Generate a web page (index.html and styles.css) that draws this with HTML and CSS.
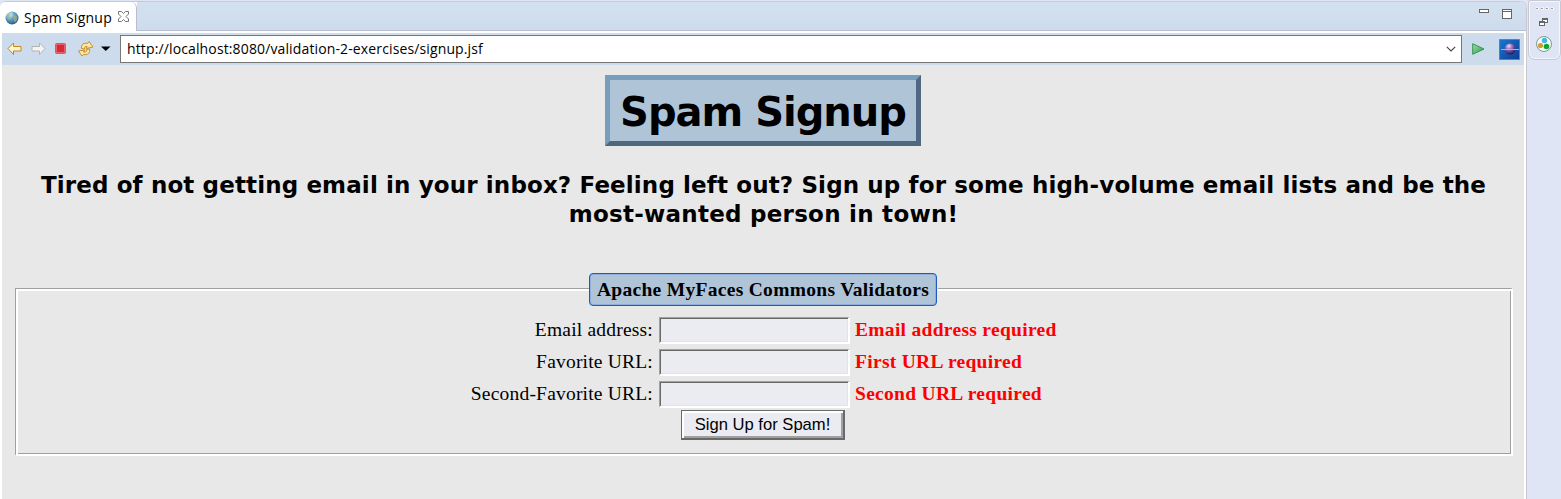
FILE: index.html
```html
<!DOCTYPE html>
<html lang="en">
<head>
<meta charset="utf-8">
<title>Spam Signup</title>
<link rel="stylesheet" href="styles.css">
</head>
<body>
<div class="workbench">
  <section class="view">
    <header class="tabbar">
      <div class="tab">
        <svg class="globe" width="14" height="14" viewBox="0 0 14 14"><defs><radialGradient id="sea" cx=".35" cy=".25" r=".8"><stop offset="0" stop-color="#e3f4f8"/><stop offset=".4" stop-color="#6aa9cf"/><stop offset="1" stop-color="#1d568c"/></radialGradient></defs><circle cx="7" cy="7" r="6.500" fill="url(#sea)"/><path d="M2 4l2-2 2 1-1 3 1 2-2 1-2-2zM9 5l2-1 1.500 3-1 3-2 1.500-1-3z" fill="#a9ba78" opacity=".65"/></svg>
        <span class="tab-title">Spam Signup</span>
        <svg class="close" width="11" height="11" viewBox="0 0 11 11"><path d="M.5.5h3L5.500 2.500 7.500.5h3v2.500L8 5.500l2.500 2.500v2.500h-3L5.500 8.500l-2 2h-3V8L3 5.500.5 3z" fill="#fff" stroke="#777"/></svg>
      </div>
      <div class="tab-space">
        <svg width="34" height="12" viewBox="0 0 34 12" shape-rendering="crispEdges"><path d="M.5 1.500h9v3h-9z" fill="#fff" stroke="#666"/><path d="M23.500 1.500h9v9h-9z" fill="#fff" stroke="#666"/><path d="M23 3.500h10" stroke="#666"/></svg>
      </div>
    </header>
    <nav class="toolbar">
      <svg class="tools" width="112" height="20" viewBox="0 0 112 20">
        <path d="M8 10l5.500-5.500v3.500h7.500v4.500h-7.500v3.500z" fill="#fff5cf" stroke="#c18620" stroke-linejoin="round" transform="translate(-2 -.5)"/>
        <path d="M43 10l-5.500-5.500v3.500H30v4.500h7.500v3.500z" fill="#f4f4f4" stroke="#b3b3b3" stroke-linejoin="round" transform="translate(0 -.5)"/>
        <rect x="53.500" y="4.500" width="10" height="10" rx="1" fill="#e85f69" stroke="#d05c66"/><rect x="55" y="6" width="7" height="7" fill="#dc2835"/>
        <path d="M79.500 9.500C79 5.500 82 3.500 85.500 4.500L87 2.500 91 8 84.500 9.500 85 7.500C83 7 82.500 8 82.500 10z" fill="#ffe7a0" stroke="#c18620" stroke-width=".9" stroke-linejoin="round"/>
        <path d="M87.500 10C88.500 14 85.500 16.500 81.500 15.500L80 17 76.500 12 82.500 11 81.500 13C84 13.500 85 12.500 84.500 10.500z" fill="#ffe7a0" stroke="#c18620" stroke-width=".9" stroke-linejoin="round"/>
        <path d="M99 7.500h9.500L103.750 12z" fill="#000"/>
      </svg>
      <div class="address"><span class="url">http://localhost:8080/validation-2-exercises/signup.jsf</span>
        <svg width="10" height="6" viewBox="0 0 10 6"><path d="M.8.8 5 5 9.200.8" fill="none" stroke="#444" stroke-width="1.100"/></svg>
      </div>
      <svg class="go" width="13" height="12" viewBox="0 0 13 12"><defs><linearGradient id="green" x2="1" y2="1"><stop stop-color="#a2dda3"/><stop offset="1" stop-color="#31974e"/></linearGradient></defs><path d="M.7.7v10.600L12 6z" fill="url(#green)" stroke="#33955a"/></svg>
      <svg class="planet" width="21" height="21" viewBox="0 0 21 21"><defs><linearGradient id="sky" x2="1" y2="1"><stop stop-color="#1878d0"/><stop offset="1" stop-color="#103b92"/></linearGradient><radialGradient id="ball" cx=".4" cy=".25" r=".8"><stop stop-color="#e8dcf6"/><stop offset=".4" stop-color="#8a6bb8"/><stop offset="1" stop-color="#1e0b4c"/></radialGradient></defs><path d="M.5.5h20v20H.5z" fill="url(#sky)" stroke="#2b91df"/><circle cx="11" cy="10" r="5.500" fill="url(#ball)"/><path d="M2 10.500h18" stroke="#a3b0ea"/></svg>
    </nav>
    <main class="page">
      <h1 class="title">Spam Signup</h1>
      <h2 class="intro"><span class="intro-first">Tired of not getting email in your inbox? Feeling left out? Sign up for some high-volume email lists and be the</span><br><span class="intro-last">most-wanted person in town!</span></h2>
      <form class="group">
        <div class="legend"><span>Apache MyFaces Commons Validators</span></div>
        <div class="fields">
          <label class="label">Email address:</label><input class="field"><b class="error">Email address required</b>
          <label class="label">Favorite URL:</label><input class="field"><b class="error">First URL required</b>
          <label class="label">Second-Favorite URL:</label><input class="field"><b class="error">Second URL required</b>
        </div>
        <button class="submit" type="button">Sign Up for Spam!</button>
      </form>
    </main>
  </section>
  <aside class="trim">
    <div class="trim-box">
      <svg width="34" height="60" viewBox="0 0 34 60"><path d="M9 8.500h3m2 0h3m2 0h3m2 0h3" stroke="#fff" stroke-width="2"/><path d="M9 8.500h2m3 0h2m3 0h2m3 0h2" stroke="#a09d98"/>
      <g fill="#fff" stroke="#666" shape-rendering="crispEdges"><path d="M15.500 18.500h5v4h-5zM12.500 21.500h5v4h-5z"/><path d="M15 19.500h6M12 22.500h6"/></g>
      <circle cx="17" cy="44" r="7.500" fill="#f5faf6" stroke="#7f9a91"/><circle cx="17.500" cy="40.500" r="2.700" fill="#42b8e9"/><circle cx="13.500" cy="45.500" r="2.600" fill="#d19b3a"/><circle cx="19.500" cy="46.500" r="2.800" fill="#07aa2e"/></svg>
    </div>
  </aside>
</div>
</body>
</html>
```
FILE: styles.css
```css
* { box-sizing: border-box; }
body { margin: 0; overflow: hidden; background: #dfe5f5; }
svg { display: block; flex: none; }
.workbench { display: flex; width: 1561px; height: 499px; }
.view { width: 1527px; height: 500px; margin-top: 1px; padding-right: 2px; background: #fff; border-top: 1px solid #c8cad0; border-right: 1px solid #c8c8d0; border-radius: 6px 7px 0 0; overflow: hidden; flex: none; }
.tabbar { display: flex; height: 29px; margin-right: -2px; }
.tab { display: flex; align-items: center; width: 137px; padding: 2px 0 0 5px; background: #fff; border-right: 1px solid #b8bdd2; border-radius: 0 6px 0 0; flex: none; }
.tab-title { font: 14px/20px "Open Sans", "Noto Sans", sans-serif; white-space: nowrap; width: 90px; margin-left: 5px; letter-spacing: .26px; }
.close { margin-left: 4px; margin-top: -2px; }
.tab-space { flex: 1; display: flex; justify-content: flex-end; padding: 6px 13px 0 0; background: linear-gradient(#d3e0f0, #cddcec); border-bottom: 1px solid #b8bdd2; }
.toolbar { display: flex; align-items: center; height: 32px; margin: 2px 0 0 2px; background: #cddcec; }
.tools { margin-right: 6px; }
.address { display: flex; align-items: center; justify-content: space-between; width: 1342px; height: 28px; padding: 0 5px 0 6px; background: #fff; border: 1px solid #777; flex: none; }
.url { font: 14px/20px "Open Sans", "Noto Sans", sans-serif; white-space: nowrap; letter-spacing: .13px; }
.go { margin-left: 10px; }
.planet { margin-left: 14px; }
.page { height: 436px; margin-left: 2px; padding: 10px 11px 0 13px; background: #e8e8e8; }
.title { width: 316px; height: 71px; margin: 0 auto; position: relative; left: -1px; border: 5px solid; border-color: #789ebd #50687f #50687f #789ebd; background: #b0c4d8; text-align: center; font: bold 40px/64px "DejaVu Sans", sans-serif; letter-spacing: -1px; white-space: nowrap; }
.intro { height: 58px; margin: 25px 0 0; padding-right: 1px; text-align: center; font: bold 23px/29px "DejaVu Sans", sans-serif; white-space: nowrap; }
.intro-first { letter-spacing: .13px; }
.intro-last { letter-spacing: .26px; }
.group { height: 168px; margin-top: 59px; border: solid; border-width: 1px 2px 2px 1px; border-color: #a0a0a0 #fff #fff #a0a0a0; box-shadow: inset 2px 2px #fff, inset -1px -1px #a0a0a0; display: flex; flex-direction: column; align-items: center; padding-right: 1px; }
.legend { width: 348px; height: 33px; margin-top: -16px; border: 1px solid #1f5bbb; border-radius: 4px; background: #b0c4d8; box-shadow: inset 0 0 0 1px #8eaedb, 1px 0 #e8e8e8; text-align: center; font: bold 19.5px/31px "Liberation Serif", serif; letter-spacing: .3px; white-space: nowrap; flex: none; }
.fields { display: grid; grid-template-columns: 193px 191px 210px; grid-template-rows: 27px 27px 27px; row-gap: 5px; column-gap: 5px; margin-top: 11px; }
.label { text-align: right; white-space: nowrap; font: 19.5px/25px "Liberation Serif", serif; letter-spacing: .2px; padding-right: 1px; }
.field { width: 191px; height: 27px; margin: 0; padding: 0 4px; border: solid; border-width: 1px 2px 2px 1px; border-color: #a0a0a0 #fff #fff #a0a0a0; box-shadow: inset 1px 1px #696969, inset -1px -1px #e3e3e3; background: #ebecf2; border-radius: 0; outline: 0; }
.error { color: #f00; white-space: nowrap; font: bold 19.5px/25px "Liberation Serif", serif; letter-spacing: .3px; }
.submit { width: 164px; height: 30px; margin-top: 2px; padding: 0; border: solid #696969; border-width: 1px 2px 2px 1px; border-radius: 0; background: #ebecf2; box-shadow: inset 2px 2px #fff, inset -2px -2px #a0a0a0; font: 16.6px/26px "Liberation Sans", Arial, sans-serif; color: #000; flex: none; white-space: nowrap; }
.trim { width: 34px; padding-left: 1px; }
.trim-box { width: 33px; height: 60px; border: 1px solid #c8c8d2; border-radius: 2px 2px 7px 7px; box-shadow: inset 0 0 0 1px #f4f6fd; }
.trim-box svg { margin: -1px -1px -1px -2px; }
```
